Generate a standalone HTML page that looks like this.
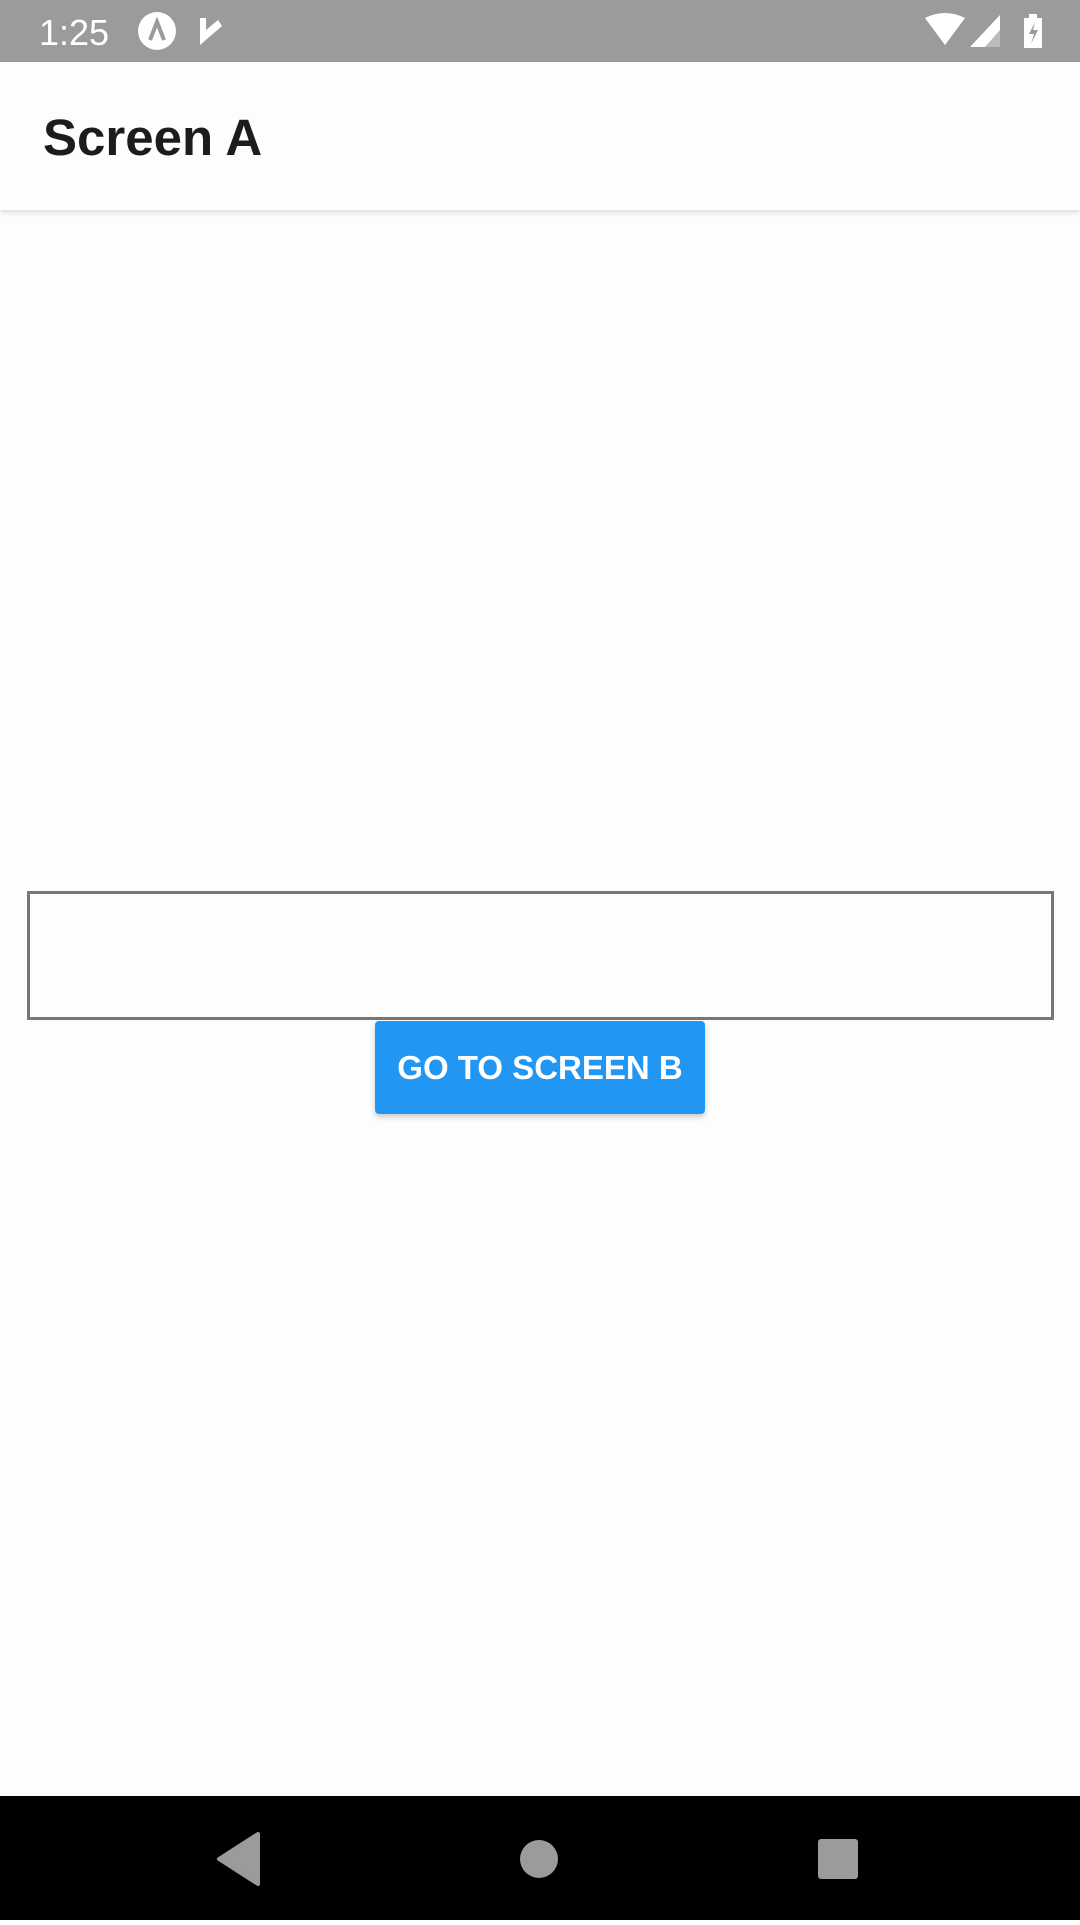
<!DOCTYPE html>
<html><head><style>
body{margin:0;width:1080px;height:1920px;background:#fdfdfd;font-family:"Liberation Sans",Roboto,sans-serif;position:relative;overflow:hidden}
.sb{position:absolute;left:0;top:0;width:1080px;height:62px;background:#9b9b9b}
.t{position:absolute;left:39px;top:12px;color:#fff;font-size:36px}
.ab{position:absolute;left:0;top:62px;width:1080px;height:148px;background:#fdfdfd;box-shadow:0 3px 5px rgba(0,0,0,.12)}
.ab span{position:absolute;left:43px;top:46px;font-size:51px;font-weight:bold;color:#1c1c1c}
.in{position:absolute;left:27px;top:891px;height:129px;box-sizing:border-box;width:1027px;border:3px solid #777}
.btn{position:absolute;left:375px;top:1021px;width:330px;height:93px;background:#2196f3;border-radius:4px;box-shadow:0 3px 6px rgba(0,0,0,.2);color:#fff;font-weight:bold;font-size:33px;text-align:center;line-height:93px}
.nav{position:absolute;left:0;top:1796px;width:1080px;height:124px;background:#000}
</style></head><body>
<div class="sb"><div class="t">1:25</div>
<svg style="position:absolute;left:0;top:0" width="1080" height="62">
<circle cx="157" cy="31" r="19" fill="#fff"/><path d="M150 40 L157 22 L164 40" stroke="#9b9b9b" stroke-width="4" fill="none"/>
<path d="M200 18 L206 18 L206 30 L218 20 L222 26 L200 45 Z" fill="#fff"/>
<path d="M925 18 Q945 8 965 18 L945 45 Z" fill="#fff"/>
<path d="M970 47 L1000 15 L1000 47 Z" fill="#fff"/><path d="M985 47 L1000 30 L1000 47Z" fill="#bbb"/>
<rect x="1024" y="18" width="18" height="30" fill="#fff"/><rect x="1029" y="14" width="8" height="5" fill="#fff"/>
<path d="M1035 22 L1029 34 L1034 34 L1031 44 L1038 30 L1033 30Z" fill="#9b9b9b"/>
</svg></div>
<div class="ab"><span>Screen A</span></div>
<div class="in"></div>
<div class="btn">GO TO SCREEN B</div>
<div class="nav"><svg width="1080" height="124">
<path d="M258 38 L258 88 L219 63 Z" fill="#9b9b9b" stroke="#9b9b9b" stroke-width="4" stroke-linejoin="round"/>
<circle cx="539" cy="63" r="19" fill="#9b9b9b"/>
<rect x="818" y="43" width="40" height="40" rx="3" fill="#9b9b9b"/>
</svg></div>
</body></html>
